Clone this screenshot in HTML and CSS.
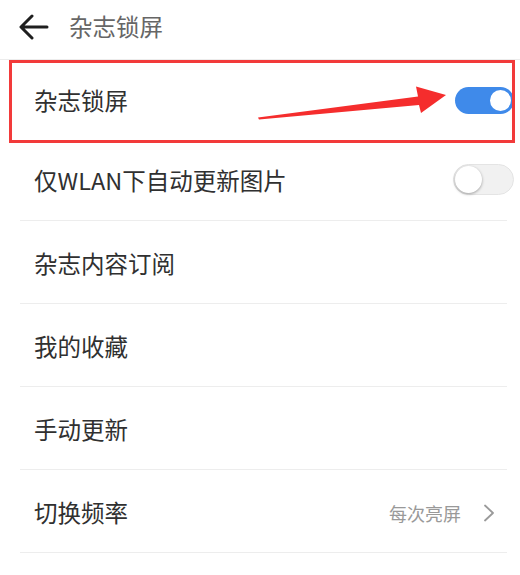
FILE: index.html
```html
<!DOCTYPE html>
<html lang="zh-CN">
<head>
<meta charset="utf-8">
<link rel="stylesheet" href="styles.css">
</head>
<body>
<div class="page">
  <header class="topbar">
    <svg class="back" width="30" height="26" viewBox="0 0 30 26" aria-hidden="true">
      <path d="M28 13 H3 M13 2 L2 13 L13 24" fill="none" stroke="#1f1f1f" stroke-width="3" stroke-linecap="round" stroke-linejoin="round"/>
    </svg>
    <span class="title">杂志锁屏</span>
  </header>
  <ul class="list">
    <li class="row first"><span class="label">杂志锁屏</span><span class="switch on"><span class="knob"></span></span></li>
    <li class="row"><span class="label">仅WLAN下自动更新图片</span><span class="switch off"><span class="knob"></span></span></li>
    <li class="row"><span class="label">杂志内容订阅</span></li>
    <li class="row"><span class="label">我的收藏</span></li>
    <li class="row"><span class="label">手动更新</span></li>
    <li class="row"><span class="label">切换频率</span><span class="value">每次亮屏</span>
      <svg class="chev" width="12" height="18" viewBox="0 0 12 18" aria-hidden="true"><path d="M2 1.5 L10 9 L2 16.5" fill="none" stroke="#9a9a9a" stroke-width="1.8" stroke-linejoin="round" stroke-linecap="round"/></svg>
    </li>
  </ul>
  <div class="highlight"></div>
  <svg class="pointer" width="520" height="575" viewBox="0 0 520 575" aria-hidden="true">
    <polygon points="258,117.5 418,96.5 416,86.5 446,95 421,113 419,105 259,119.5" fill="#f52d2d"/>
  </svg>
</div>
</body>
</html>
```
FILE: styles.css
```css
* { box-sizing: border-box; }
html, body { margin: 0; padding: 0; background: #fff; }
body {
  font-family: "Noto Sans CJK SC", "Noto Sans", sans-serif;
  color: #333;
  width: 520px;
  height: 575px;
  overflow: hidden;
}
.page { position: relative; width: 520px; height: 575px; }
.topbar {
  height: 60px;
  display: flex;
  align-items: center;
  padding: 0 0 6px 19px;
  border-bottom: 1px solid #ececec;
}
.back { display: block; flex: none; }
.title {
  margin-left: 20px;
  font-size: 23.5px;
  color: #666;
  line-height: 1;
}
.list { list-style: none; margin: 0; padding: 0; }
.row {
  height: 83px;
  margin: 0 13px 0 20px;
  padding: 4px 0 0 14px;
  display: flex;
  align-items: center;
  border-bottom: 1px solid #ededed;
}
.row.first { height: 78px; border-bottom-color: transparent; padding-top: 4px; }
.label { font-size: 23.5px; color: #303030; line-height: 1; flex: 1; }
.value { font-size: 18px; color: #999; margin-right: 22px; line-height: 1; }
.chev { display: block; margin-right: 12px; }
.switch {
  position: relative;
  width: 60px;
  height: 28px;
  border-radius: 14px;
  margin-right: -7px;
  flex: none;
}
.switch.on { background: #3f8aea; width: 59px; height: 27px; border-radius: 13.5px; }
.switch.off { background: #f1f1f1; border: 1px solid #e4e4e4; width: 61px; height: 31px; border-radius: 15.5px; margin-top: -4px; }
.knob {
  position: absolute;
  border-radius: 50%;
  background: #fff;
}
.on .knob { width: 25px; height: 25px; right: 1px; top: 1px; border: 2px solid #3f8aea; }
.off .knob { width: 27px; height: 27px; left: 1px; top: 1px; box-shadow: 0 1px 3px rgba(0,0,0,0.35); }
.highlight {
  position: absolute;
  left: 9px;
  top: 60px;
  width: 506px;
  height: 83px;
  border: 3px solid #f23a3a;
}
.pointer { position: absolute; left: 0; top: 0; pointer-events: none; }
```
